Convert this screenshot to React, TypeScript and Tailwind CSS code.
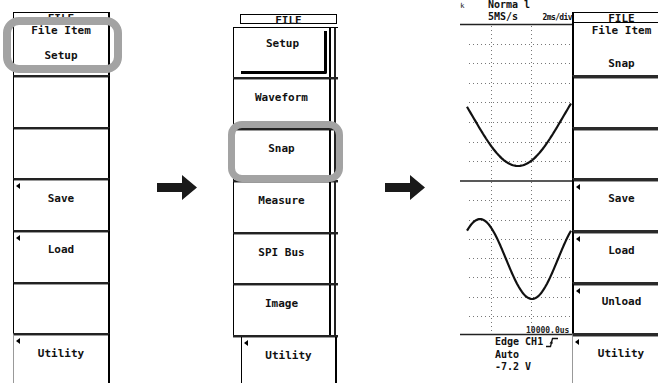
import React from "react";

const SEP = "border-t-2 border-t-[#222] shadow-[inset_0_1px_0_#9a9a9a]";
const SEP3 = "border-t-[3px] border-t-[#2a2a2a] shadow-[inset_0_1px_0_#9a9a9a]";

function Tri() {
  return (
    <span className="absolute left-[2px] top-[3px] h-0 w-0 border-y-[3.5px] border-r-[4px] border-y-transparent border-r-black" />
  );
}

function Label({ children, className = "" }: { children: React.ReactNode; className?: string }) {
  return (
    <p className={`text-center text-[11px] font-bold leading-[12px] whitespace-pre ${className}`}>
      {children}
    </p>
  );
}

function Arrow({ className = "" }: { className?: string }) {
  return (
    <svg width="40" height="25" viewBox="0 0 40 25" className={`shrink-0 ${className}`}>
      <polygon points="0,8 25,8 25,0 40,12.5 25,25 25,17 0,17" fill="#1a1a1a" />
    </svg>
  );
}

// left menu, File Item = Setup
function MenuSetup() {
  const side = "border-l border-l-black border-r-2 border-r-black";
  return (
    <div className="ml-[13px] flex w-[97px] shrink-0 flex-col">
      <div className={`mt-[12px] h-[10px] border-t border-t-black ${side}`}>
        <Label className="leading-[9px]">FILE</Label>
      </div>
      <div className={`h-[53px] border-t border-t-black pt-[2px] ${side}`}>
        <Label>File Item</Label>
        <Label className="mt-[13px]">Setup</Label>
      </div>
      <div className={`h-[52px] ${SEP} ${side}`} />
      <div className={`h-[51px] ${SEP} ${side}`} />
      <div className={`relative h-[52px] pt-[13px] ${SEP} ${side}`}>
        <Tri />
        <Label>Save</Label>
      </div>
      <div className={`relative h-[52px] pt-[12px] ${SEP} ${side}`}>
        <Tri />
        <Label>Load</Label>
      </div>
      <div className={`h-[51px] ${SEP} ${side}`} />
      <div className={`relative h-[50px] pt-[13px] ${SEP} border-l border-l-[#999] border-r-2 border-r-black`}>
        <Tri />
        <Label>Utility</Label>
      </div>
    </div>
  );
}

function ItemRow({ h, label, top = SEP }: { h: string; label: string; top?: string }) {
  return (
    <div className={`flex ${h} ${top}`}>
      <div className="w-[98px] border-l border-r-2 border-black pt-[13px]">
        <Label>{label}</Label>
      </div>
      <div className="w-[3px]" />
      <div className="w-[2px] bg-[#222]" />
    </div>
  );
}

// middle menu, FILE item list
function MenuItems() {
  return (
    <div className="ml-[36px] flex w-[105px] shrink-0 flex-col">
      <div className="ml-[7px] mt-[14px] h-[10px] w-[97px] border border-black">
        <Label className="leading-[8px]">FILE</Label>
      </div>
      <div className="mt-[3px] flex h-[50px] border-t border-black">
        <div className="w-[98px] border-l border-r-2 border-black pl-[7px] pr-[2px] pt-[3px]">
          <div className="h-[43px] rounded-br-[2px] border-b-[3px] border-r-[3px] border-black pt-[7px]">
            <Label>Setup</Label>
          </div>
        </div>
        <div className="w-[3px]" />
        <div className="w-[2px] bg-[#222]" />
      </div>
      <ItemRow h="h-[51px]" label="Waveform" />
      <ItemRow h="h-[52px]" label="Snap" />
      <ItemRow h="h-[52px]" label="Measure" />
      <ItemRow h="h-[51px]" label="SPI Bus" />
      <ItemRow h="h-[52px]" label="Image" />
      <div className={`h-[48px] ${SEP}`}>
        <div className="relative ml-[8px] h-full w-[96px] border-l border-r-2 border-black pt-[13px]">
          <Tri />
          <Label>Utility</Label>
        </div>
      </div>
    </div>
  );
}

function wave(fn: (x: number) => number) {
  const pts: string[] = [];
  for (let x = 7; x <= 111; x += 1) {
    pts.push(`${x},${fn(x + 460).toFixed(1)}`);
  }
  return "M" + pts.join(" L");
}

function Scope() {
  const topH = [1, 2, 3, 4, 5, 6, 7].map((k) => 19.6 * k);
  const botH = [1, 2, 3, 4, 5, 6, 7].map((k) => 157 + 19.25 * k);
  const ch1 = wave((X) => 166 - 49 * (1 - Math.cos((2 * Math.PI * (X - 518)) / 180)) - 24);
  const ch2 = wave((X) => 259 + 40 * Math.cos((2 * Math.PI * (X - 532)) / 104) - 24);

  return (
    <div className="ml-[35px] flex w-[112px] shrink-0 flex-col font-bold">
      <div className="flex h-[24px]">
        <div className="w-[7px] overflow-hidden pt-[3px] text-[7px] leading-[7px] font-normal">
          <span className="-ml-[4px] block">0k</span>
        </div>
        <div className="-mt-[1px] ml-[21px] text-[10px] leading-[12px]">
          <p>Norma l</p>
          <p>5MS/s</p>
        </div>
        <p className="ml-auto pt-[13px] text-[8px] leading-[9px] tracking-[-0.6px]">2ms/div</p>
      </div>
      <svg width="112" height="311" viewBox="0 0 112 311" className="block overflow-visible">
        <g stroke="#777" strokeWidth="1" strokeDasharray="1 3">
          {topH.concat(botH).map((y) => (
            <line key={y} x1="9" x2="110" y1={Math.round(y) + 0.5} y2={Math.round(y) + 0.5} />
          ))}
          <line x1="31.5" x2="31.5" y1="2" y2="309" />
          <line x1="71.5" x2="71.5" y1="2" y2="309" />
        </g>
        <line x1="0" x2="112" y1="0.5" y2="0.5" stroke="#222" strokeWidth="1.5" />
        <line x1="0" x2="112" y1="157" y2="157" stroke="#222" strokeWidth="1.5" />
        <line x1="0" x2="112" y1="310.5" y2="310.5" stroke="#222" strokeWidth="1.5" />
        <path d={ch1} fill="none" stroke="#111" strokeWidth="2.2" />
        <path d={ch2} fill="none" stroke="#111" strokeWidth="2.2" />
        <text x="66" y="309" fontSize="8" fontFamily="DejaVu Sans Mono, monospace" fill="#222">
          10000.0us
        </text>
      </svg>
      <div className="pl-[35px] pt-[1px] text-[10px] leading-[12.5px]">
        <div className="flex items-center">
          <p>Edge CH1</p>
          <svg width="13" height="11" viewBox="0 0 13 11" className="ml-[3px]">
            <path d="M0 9.5 H4.5 L6.5 1.5 H12" fill="none" stroke="#111" strokeWidth="1.3" />
            <path d="M3.5 6.5 L5.5 3.5 L7 6.5 Z" fill="#111" />
          </svg>
        </div>
        <p>Auto</p>
        <p>-7.2 V</p>
      </div>
    </div>
  );
}

// right menu, File Item = Snap
function MenuSnap() {
  const side = "border-l-2 border-l-black";
  return (
    <div className="flex w-[97px] shrink-0 flex-col">
      <div className={`mt-[12px] h-[10px] border-t border-t-black ${side}`}>
        <Label className="leading-[9px]">FILE</Label>
      </div>
      <div className={`h-[53px] border-t border-t-black pt-[2px] ${side}`}>
        <Label>File Item</Label>
        <Label className="mt-[21px]">Snap</Label>
      </div>
      <div className={`h-[52px] ${SEP3} ${side}`} />
      <div className={`h-[51px] ${SEP3} ${side}`} />
      <div className={`relative h-[52px] pt-[12px] ${SEP3} ${side}`}>
        <Tri />
        <Label>Save</Label>
      </div>
      <div className={`relative h-[52px] pt-[12px] ${SEP3} ${side}`}>
        <Tri />
        <Label>Load</Label>
      </div>
      <div className={`relative h-[51px] pt-[11px] ${SEP3} ${side}`}>
        <Tri />
        <Label>Unload</Label>
      </div>
      <div className={`relative h-[50px] pt-[12px] ${SEP3} border-l border-l-[#999]`}>
        <Tri />
        <Label>Utility</Label>
      </div>
    </div>
  );
}

export default function App() {
  return (
    <div className="relative flex h-[383px] w-[658px] items-start overflow-hidden bg-white font-['DejaVu_Sans_Mono',monospace] text-[#111]">
      <MenuSetup />
      <Arrow className="ml-[47px] mt-[175px]" />
      <MenuItems />
      <Arrow className="ml-[47px] mt-[175px]" />
      <Scope />
      <MenuSnap />

      {/* selection highlights */}
      <div className="absolute left-[3px] top-[17px] h-[56px] w-[119px] rounded-[16px] border-[8px] border-[#a3a3a3]" />
      <div className="absolute left-[228px] top-[121px] h-[61px] w-[115px] rounded-[14px] border-[7px] border-[#a3a3a3]" />
    </div>
  );
}
